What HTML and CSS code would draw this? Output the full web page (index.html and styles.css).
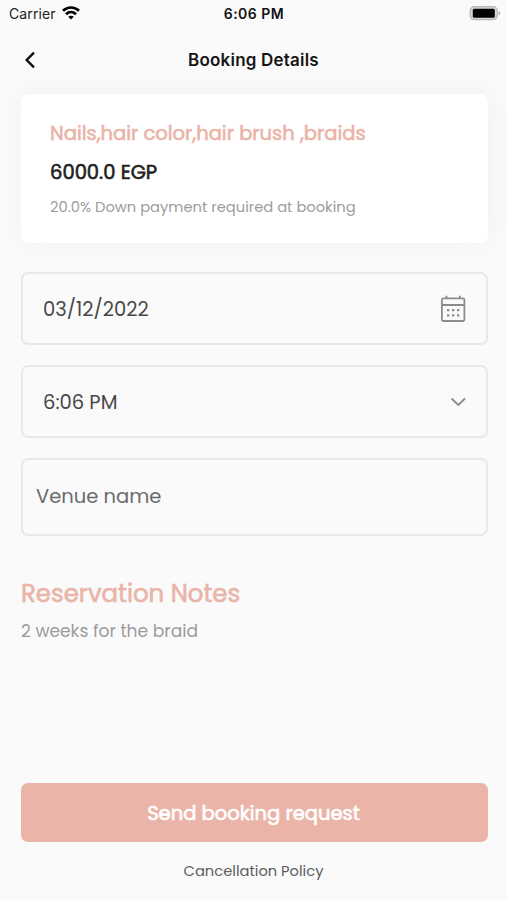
FILE: index.html
```html
<!DOCTYPE html>
<html lang="en">
<head>
  <meta charset="UTF-8" />
  <meta name="viewport" content="width=device-width, initial-scale=1.0"/>
  <title>Booking Details</title>
  <link rel="stylesheet" href="styles.css">
</head>
<body>

  <div class="status-bar">
    <div class="carrier">
      <span>Carrier</span>
      <svg width="18" height="14" viewBox="0 0 18 14" fill="none" stroke="#000" stroke-width="2.7">
        <path d="M1 4.8C5.500.4 12.500.4 17 4.800"/>
        <path d="M4 8.200C7 5.400 11 5.400 14 8.200"/>
        <path d="M9 13.500L6.200 10.700C7.800 9.300 10.200 9.300 11.800 10.700Z" fill="#000" stroke="none"/>
      </svg>
    </div>
    <span class="clock">6:06 PM</span>
    <svg class="battery" width="32" height="16" viewBox="0 0 32 16">
      <rect x="1.200" y="1.700" width="27" height="13" rx="4" fill="#d6d6d6" stroke="#b8b8b8" stroke-width="1.300"/>
      <rect x="3.800" y="3.700" width="22" height="9" rx="1.500" fill="#000"/>
      <path d="M29.500 6Q33 8.200 29.500 10.500Z" fill="#b0b0b0"/>
    </svg>
  </div>

  <header>
    <button class="back" aria-label="Back">
      <svg width="12" height="18" viewBox="0 0 12 18" fill="none" stroke="#111" stroke-width="2.400">
        <path d="M10 1.700L2.700 9L10 16.300"/>
      </svg>
    </button>
    <h1>Booking Details</h1>
  </header>

  <main>
    <section class="card">
      <h2>Nails,hair color,hair brush ,braids</h2>
      <p class="price">6000.0 EGP</p>
      <p class="deposit">20.0% Down payment required at booking</p>
    </section>

    <div class="field">
      <span>03/12/2022</span>
      <svg width="26" height="28" viewBox="0 0 26 28" fill="none" stroke="#8c8c8c" stroke-width="1.800">
        <rect x="1.900" y="3.400" width="22.500" height="22.600" rx="1.500"/>
        <path d="M2 10H24.400M6.500 .800V4M19.800 .800V4"/>
        <path d="M7 15.200H9.300M12 15.200H14.300M17 15.200H19.300M7 20.300H9.300M12 20.300H14.300M17 20.300H19.300" stroke-width="2.200"/>
      </svg>
    </div>

    <div class="field">
      <span>6:06 PM</span>
      <svg width="16" height="10" viewBox="0 0 16 10" fill="none" stroke="#8a8a8a" stroke-width="1.800">
        <path d="M1.500 1.500L8.300 8L15 1.500"/>
      </svg>
    </div>

    <div class="field venue">
      <span>Venue name</span>
    </div>

    <section class="notes">
      <h2>Reservation Notes</h2>
      <p>2 weeks for the braid</p>
    </section>
  </main>

  <footer>
    <button class="send">Send booking request</button>
    <a class="policy">Cancellation Policy</a>
  </footer>

</body>
</html>
```

FILE: styles.css
```css
* {
  box-sizing: border-box;
}

body {
  margin: 0;
  height: 900px;
  overflow: hidden;
  background: #fafafa;
  font-family: Poppins, Inter, sans-serif;
  color: #484848;
  display: flex;
  flex-direction: column;
}

h1,
h2,
p {
  margin: 0;
  white-space: nowrap;
}

button {
  border: none;
  font-family: inherit;
  cursor: pointer;
}

.status-bar,
header {
  font-family: Inter, sans-serif;
}

.status-bar {
  height: 28px;
  padding: 0 6px 2px 9px;
  display: grid;
  grid-template-columns: 1fr auto 1fr;
  align-items: center;
  font-size: 14px;
  color: #222;
}

.carrier {
  display: flex;
  align-items: center;
  gap: 6px;
  letter-spacing: 0.1px;
}

.clock {
  color: #111;
  font-weight: 600;
  letter-spacing: 0.5px;
  padding-right: 2px;
}

.battery {
  justify-self: end;
}

header {
  height: 66px;
  padding: 0 20px 3px;
  display: grid;
  grid-template-columns: 40px 1fr 40px;
  align-items: center;
}

.back {
  display: flex;
  padding: 0 4px;
  background: none;
}

h1 {
  font-size: 17px;
  font-weight: 600;
  line-height: 24px;
  letter-spacing: 0.2px;
  text-align: center;
  color: #151515;
}

main {
  flex: 1;
  padding: 0 19px 0 21px;
}

.card {
  height: 149px;
  margin-bottom: 29px;
  padding: 25px 29px;
  background: #fff;
  border-radius: 8px;
  box-shadow: 0 0 28px rgba(0, 0, 0, 0.045);
}

.card h2,
.price,
.notes h2,
.send {
  font-weight: 400;
  -webkit-text-stroke: 0.6px currentColor;
}

.card h2 {
  font-size: 19.5px;
  line-height: 30px;
  color: #eab4a7;
}

.price {
  margin-top: 9px;
  font-size: 19.5px;
  line-height: 30px;
  color: #222;
}

.deposit {
  margin-top: 8px;
  font-size: 14.7px;
  line-height: 22px;
  color: #9a9d9f;
}

.field {
  height: 73px;
  margin-bottom: 20px;
  padding: 0 20px;
  border: 2px solid #e8e8e6;
  border-radius: 7px;
  display: flex;
  align-items: center;
  justify-content: space-between;
  font-size: 19.5px;
}

.field span {
  padding-top: 2px;
}

.venue {
  height: 78px;
  padding: 0 13px 4px;
  color: #6b6b6b;
}

.notes {
  padding-top: 19px;
}

.notes h2 {
  font-size: 24.4px;
  line-height: 38px;
  color: #eab4a7;
}

.notes p {
  margin-top: 5px;
  font-size: 17.1px;
  line-height: 26px;
  color: #9a9d9f;
}

footer {
  padding: 0 19px 17px 21px;
  display: flex;
  flex-direction: column;
  align-items: center;
}

.send {
  width: 100%;
  height: 59px;
  padding: 2px 8px 0 6px;
  background: #eab5a8;
  color: #fff;
  border-radius: 7px;
  font-size: 19.5px;
}

.policy {
  margin-top: 17px;
  padding-right: 2px;
  font-size: 14.7px;
  line-height: 24px;
  color: #5c5c5c;
}
```
